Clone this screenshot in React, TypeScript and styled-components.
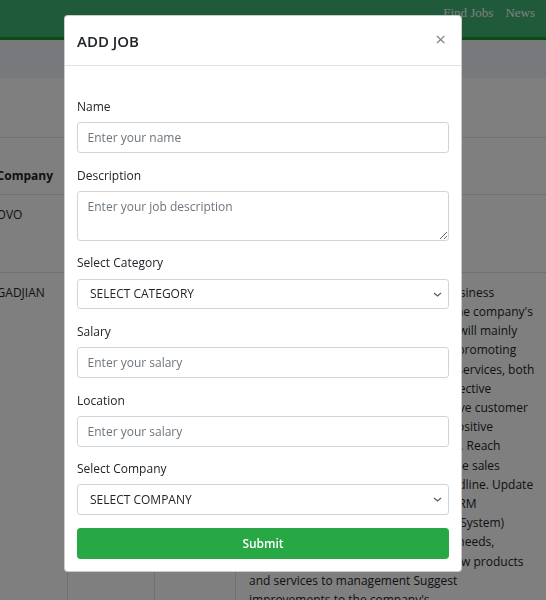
import React from "react";
import styled, { createGlobalStyle } from "styled-components";

const GlobalStyle = createGlobalStyle`
  html, body {
    margin: 0;
    padding: 0;
    background: #fff;
    overflow: hidden;
  }
  body {
    font-family: "Open Sans", "Noto Sans", sans-serif;
    font-size: 12px;
    line-height: 19.2px;
    color: #212529;
  }
  * {
    box-sizing: border-box;
  }
`;

const Page = styled.div`
  width: 546px;
  height: 600px;
  overflow: hidden;
`;

const Navbar = styled.nav`
  height: 40px;
  background: #3eb474;
  border-bottom: 3px solid #169a20;
  display: flex;
  justify-content: flex-end;
  align-items: flex-start;
  gap: 12px;
  padding: 3px 11px 0 0;
`;

const NavLink = styled.a`
  font-family: "Liberation Serif", "DejaVu Serif", serif;
  font-size: 13px;
  color: #fff;
  text-decoration: none;
`;

const Band = styled.div`
  height: 38px;
  background: #eef3f8;
`;

const Section = styled.section`
  padding-top: 59px;
  margin-left: -14px;
`;

const Table = styled.table`
  border-collapse: collapse;
  table-layout: fixed;
  width: 564px;
`;

const Th = styled.th<{ $w: number }>`
  width: ${(p) => p.$w}px;
  text-align: left;
  vertical-align: bottom;
  font-weight: 700;
  padding: 9px 9.6px;
  border: 1px solid #dee2e6;
`;

const Td = styled.td<{ $pl?: number }>`
  vertical-align: top;
  padding: 9.6px;
  padding-left: ${(p) => p.$pl ?? 9.6}px;
  border: 1px solid #dee2e6;
  overflow: hidden;
`;

const Line = styled.span`
  display: block;
  white-space: nowrap;
`;

const Backdrop = styled.div`
  position: fixed;
  inset: 0;
  padding-right: 20px;
  background: rgba(0, 0, 0, 0.5);
  display: flex;
  justify-content: center;
  align-items: flex-start;
`;

const Dialog = styled.div`
  margin-top: 15px;
  width: 398px;
  background: #fff;
  border: 1px solid rgba(0, 0, 0, 0.2);
  border-radius: 4px;
  display: flex;
  flex-direction: column;
`;

const Header = styled.div`
  height: 50px;
  display: flex;
  align-items: center;
  justify-content: space-between;
  padding: 0 12px;
  border-bottom: 1px solid #dee2e6;
`;

const Title = styled.h5`
  margin: 0;
  font-size: 15px;
  font-weight: 600;
  line-height: 1.2;
  color: #212529;
`;

const Close = styled.button`
  border: 0;
  background: transparent;
  padding: 0 3px 2px 0;
  font-family: "Open Sans", sans-serif;
  font-size: 19px;
  font-weight: 400;
  line-height: 1;
  color: #000;
  opacity: 0.5;
  cursor: pointer;
`;

const Body = styled.form`
  padding: 31px 12px 12px;
  display: flex;
  flex-direction: column;
`;

const Group = styled.div`
  display: flex;
  flex-direction: column;
  margin-bottom: 12.6px;
`;

const Label = styled.label`
  margin-bottom: 6px;
  line-height: 19.2px;
`;

const fieldCss = `
  width: 100%;
  font-family: inherit;
  font-size: 12px;
  line-height: 19.2px;
  color: #495057;
  background: #fff;
  border: 1px solid #ced4da;
  border-radius: 3.2px;
  padding: 4.8px 9.6px;
  outline: none;
  &::placeholder {
    color: #6c757d;
    opacity: 1;
  }
`;

const Input = styled.input`
  ${fieldCss}
  height: 30.8px;
`;

const TextArea = styled.textarea`
  ${fieldCss}
  height: 50px;
  resize: vertical;
  display: block;
`;

const SelectWrap = styled.div`
  position: relative;
`;

const Select = styled.select`
  ${fieldCss}
  height: 30.8px;
  padding-left: 12px;
  appearance: none;
  color: #212529;
`;

const Chevron = styled.svg`
  position: absolute;
  right: 7px;
  top: 13px;
  pointer-events: none;
`;

const Submit = styled.button`
  height: 30.8px;
  width: 100%;
  border: 1px solid #28a745;
  border-radius: 3.2px;
  background: #28a745;
  color: #fff;
  font-family: inherit;
  font-size: 12px;
  font-weight: 600;
  cursor: pointer;
`;

const descriptionLines = [
  "Find and develop new and existing business",
  "opportunities in accordance with all the company's",
  "vision and mission. The sales staffers will mainly",
  "be mostly responsible for selling and promoting",
  "all of the company's products and its services, both",
  "online and offline, through a more effective",
  "communications. Build up, and improve customer",
  "relationships in order to generate a positive",
  "image and reputation of the company. Reach",
  "the monthly targets, determined by the sales",
  "team in accordance with the final deadline. Update",
  "customer data and all activity in the CRM",
  "(Customer Relationship Management System)",
  "Identify and then analyze customers' needs,",
  "then provide some input regarding new products",
  "and services to management Suggest",
  "improvements to the company's",
  "sales process.",
];

const SelectField = ({ label, option }: { label: string; option: string }) => (
  <Group>
    <Label>{label}</Label>
    <SelectWrap>
      <Select defaultValue="">
        <option value="">{option}</option>
      </Select>
      <Chevron width="9" height="5" viewBox="0 0 9 5">
        <path d="M1 1l3.5 3L8 1" fill="none" stroke="#555" strokeWidth="1.1" />
      </Chevron>
    </SelectWrap>
  </Group>
);

export default function App() {
  return (
    <Page>
      <GlobalStyle />
      <Navbar>
        <NavLink href="#">Find Jobs</NavLink>
        <NavLink href="#">News</NavLink>
      </Navbar>
      <Band />
      <Section>
        <Table>
          <thead>
            <tr>
              <Th $w={81}>Company</Th>
              <Th $w={87}>Job Name</Th>
              <Th $w={81}>Job Category</Th>
              <Th $w={315}>Job Description</Th>
            </tr>
          </thead>
          <tbody>
            <tr>
              <Td>OVO</Td>
              <Td>Sales Executive</Td>
              <Td>
                <Line>Sales</Line>
                <Line>and</Line>
                <Line>Marketing</Line>
              </Td>
              <Td $pl={13}>Sales staff for OVO</Td>
            </tr>
            <tr>
              <Td>GADJIAN</Td>
              <Td>Sales Staff</Td>
              <Td>Sales</Td>
              <Td $pl={13}>
                {descriptionLines.map((l) => (
                  <Line key={l}>{l}</Line>
                ))}
              </Td>
            </tr>
          </tbody>
        </Table>
      </Section>

      <Backdrop>
        <Dialog>
          <Header>
            <Title>ADD JOB</Title>
            <Close type="button" aria-label="Close">
              ×
            </Close>
          </Header>
          <Body onSubmit={(e) => e.preventDefault()}>
            <Group>
              <Label>Name</Label>
              <Input placeholder="Enter your name" />
            </Group>
            <Group>
              <Label>Description</Label>
              <TextArea placeholder="Enter your job description" rows={2} />
            </Group>
            <SelectField label="Select Category" option="SELECT CATEGORY" />
            <Group>
              <Label>Salary</Label>
              <Input placeholder="Enter your salary" />
            </Group>
            <Group>
              <Label>Location</Label>
              <Input placeholder="Enter your salary" />
            </Group>
            <SelectField label="Select Company" option="SELECT COMPANY" />
            <Submit type="submit">Submit</Submit>
          </Body>
        </Dialog>
      </Backdrop>
    </Page>
  );
}
